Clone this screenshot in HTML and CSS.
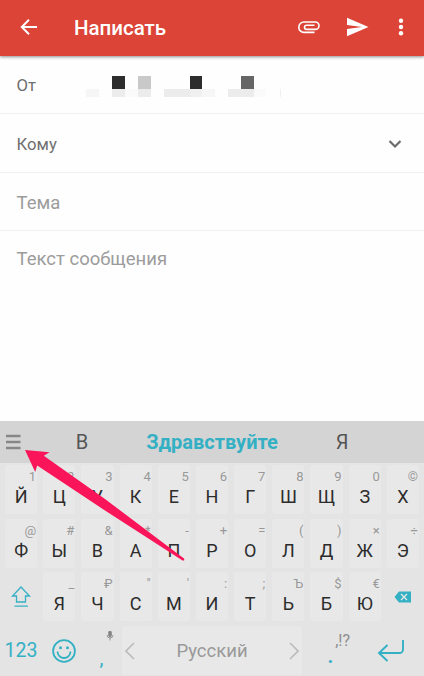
FILE: index.html
```html
<!DOCTYPE html>
<html lang="ru">
<head>
    <meta charset="utf-8">
    <title>Написать</title>
    <link rel="stylesheet" href="styles.css">
</head>
<body>
    <header class="toolbar">
        <svg class="back" width="24" height="24" viewBox="0 0 24 24"><path d="M20 12H5M12 4.8L4.8 12L12 19.2"/></svg>
        <h1>Написать</h1>
        <svg class="clip" width="24" height="24" viewBox="0 0 24 24"><path d="M17.5 17.4H7a5.2 5.2 0 0 1 0-10.4h11.3a3.7 3.7 0 0 1 0 7.4H9.6a2.1 2.1 0 0 1 0-4.2h7.9"/></svg>
        <svg class="send" width="24" height="24" viewBox="0 0 24 24"><path d="M2 21.2L23.5 12L2 2.8V10l15 2-15 2z"/></svg>
        <svg class="more" width="8" height="24" viewBox="0 0 8 24"><circle cx="4" cy="5.8" r="2.2"/><circle cx="4" cy="12" r="2.2"/><circle cx="4" cy="18.2" r="2.2"/></svg>
    </header>

    <main class="compose">
        <div class="field">
            <span>От</span>
            <svg class="address" width="196" height="22" viewBox="0 0 196 22" shape-rendering="crispEdges">
                <path fill="#2d2d2d" d="M26 0h13v13H26zM104 0h12v13h-12z"/>
                <path fill="#c9c9c9" d="M52 0h13v13H52z"/>
                <path fill="#666" d="M155 0h13v13h-13z"/>
                <path fill="#f6f6f6" d="M0 13h13v8H0zM116 13h13v8h-13z"/>
                <path fill="#ececec" d="M26 13h13v8H26zM52 13h13v8H52zM78 13h26v8H78zM142 13h26v8h-26z"/>
                <path fill="#fafafa" d="M39 13h13v8H39zM168 13h12v8h-12z"/>
                <path fill="#f0f0f0" d="M104 13h12v8h-12zM194 13h1v8h-1z"/>
            </svg>
        </div>
        <div class="field">
            <span>Кому</span>
            <svg class="expand" width="14" height="10" viewBox="0 0 14 10"><path d="M1.5 2L7 7.5L12.5 2"/></svg>
        </div>
        <div class="field subject">Тема</div>
        <div class="message">Текст сообщения</div>
    </main>

    <section class="keyboard">
        <div class="suggestions">
            <svg class="menu" width="16" height="16" viewBox="0 0 16 16"><path d="M1 2h14.5M1 8h14.5M1 14h14.5"/></svg>
            <span>В</span>
            <b>Здравствуйте</b>
            <span>Я</span>
        </div>

        <div class="row">
            <div class="key"><i>1</i>Й</div>
            <div class="key"><i>2</i>Ц</div>
            <div class="key"><i>3</i>У</div>
            <div class="key"><i>4</i>К</div>
            <div class="key"><i>5</i>Е</div>
            <div class="key"><i>6</i>Н</div>
            <div class="key"><i>7</i>Г</div>
            <div class="key"><i>8</i>Ш</div>
            <div class="key"><i>9</i>Щ</div>
            <div class="key"><i>0</i>З</div>
            <div class="key"><i>©</i>Х</div>
        </div>
        <div class="row">
            <div class="key"><i>@</i>Ф</div>
            <div class="key"><i>#</i>Ы</div>
            <div class="key"><i>&amp;</i>В</div>
            <div class="key"><i>*</i>А</div>
            <div class="key"><i>-</i>П</div>
            <div class="key"><i>+</i>Р</div>
            <div class="key"><i>=</i>О</div>
            <div class="key"><i>(</i>Л</div>
            <div class="key"><i>)</i>Д</div>
            <div class="key"><i>×</i>Ж</div>
            <div class="key"><i>÷</i>Э</div>
        </div>
        <div class="row">
            <div class="special">
                <svg class="shift" width="20" height="22" viewBox="0 0 20 22"><path d="M10 1L1.5 10H5.5V16H14.5V10H18.5zM3.5 20.2h13.5"/></svg>
            </div>
            <div class="key"><i>_</i>Я</div>
            <div class="key"><i>₽</i>Ч</div>
            <div class="key"><i>"</i>С</div>
            <div class="key"><i>'</i>М</div>
            <div class="key"><i>:</i>И</div>
            <div class="key"><i>;</i>Т</div>
            <div class="key"><i>Ъ</i>Ь</div>
            <div class="key"><i>$</i>Б</div>
            <div class="key"><i>€</i>Ю</div>
            <div class="special">
                <svg width="18" height="12" viewBox="0 0 18 12"><path fill="#34b0c4" d="M5 0.5H17V11.5H5L0.5 6z"/><path stroke="#e6e6e6" stroke-width="1.3" d="M7 3l6 6M13 3l-6 6"/></svg>
            </div>
        </div>
        <div class="row bottom">
            <div class="special digits">123</div>
            <div class="special">
                <svg class="smile" width="26" height="26" viewBox="0 0 26 26"><circle cx="13" cy="13" r="10.9"/><path d="M6.500 13.500a6.500 6.500 0 0 0 13 0"/><circle class="eye" cx="9.500" cy="9.800" r="1.500"/><circle class="eye" cx="16.500" cy="9.800" r="1.500"/></svg>
            </div>
            <div class="special comma">
                <svg class="mic" width="8" height="10" viewBox="0 0 8 10"><rect x="2.6" y="0" width="2.8" height="5.8" rx="1.4"/><path fill="none" d="M1 4a3 3 0 0 0 6 0M4 7v2.5"/></svg>,
            </div>
            <div class="space">
                <svg width="10" height="18" viewBox="0 0 10 18"><path d="M9 1L1 9L9 17"/></svg>
                Русский
                <svg width="10" height="18" viewBox="0 0 10 18"><path d="M1 1L9 9L1 17"/></svg>
            </div>
            <div class="special period"><i>,!?</i>.</div>
            <div class="special">
                <svg class="enter" width="28" height="24" viewBox="0 0 28 24"><path d="M26 1V10.5a3.5 3.5 0 0 1-3.5 3.5H2M10.5 6L2 14L10.5 22"/></svg>
            </div>
        </div>
    </section>

    <svg class="pointer" width="162" height="114" viewBox="0 0 162 114"><path d="M0 0L24.5 2.3L18.8 5.7L80 49L159 108.5Q160 111 157.5 110.5L80 60.5L12.2 15.5L10.2 22z"/></svg>
</body>
</html>
```
FILE: styles.css
```css
body {
    display: flex;
    flex-direction: column;
    position: relative;
    width: 424px;
    height: 676px;
    margin: 0;
    overflow: hidden;
    background: #fefefe;
    font-family: Roboto, sans-serif;
}
svg {
    flex: none;
    fill: none;
}

/* toolbar */
.toolbar {
    display: flex;
    align-items: center;
    box-sizing: border-box;
    height: 56px;
    padding: 0 19px 2px 17px;
    background: #dc4437;
    box-shadow: 0 1px 3px rgba(0, 0, 0, 0.45);
}
.toolbar h1 {
    flex: 1;
    margin: 2px 0 0 33px;
    color: #fff;
    font-size: 20.5px;
    font-weight: 500;
}
.back {
    stroke: #fff;
    stroke-width: 2;
}
.clip {
    margin-right: 24px;
    stroke: #fff;
    stroke-width: 1.6;
}
.send {
    margin-right: 28px;
    fill: #fff;
}
.more {
    fill: #fff;
}

/* message form */
.compose {
    flex: 1;
}
.field {
    display: flex;
    align-items: center;
    box-sizing: border-box;
    height: 58px;
    padding: 2px 22px 0 16.5px;
    border-bottom: 1px solid #f0f0f0;
    color: #6f6f6f;
    font-size: 16.7px;
}
.field:nth-child(2) {
    height: 59px;
}
.address {
    margin: 3px 0 0 50px;
}
.expand {
    margin-left: auto;
    stroke: #6b6b6b;
    stroke-width: 2.2;
}
.subject,
.message {
    color: #9c9c9c;
    font-size: 18.5px;
}
.message {
    padding: 17px 16.5px;
}

/* keyboard */
.keyboard {
    height: 255px;
    background: #e4e4e4;
    color: #2c2c2c;
}
.suggestions {
    display: grid;
    grid-template-columns: 40px 84px 176px 84px;
    align-items: center;
    height: 42px;
    margin-bottom: 2px;
    background: #d4d4d4;
    color: #555;
    font-size: 20px;
    text-align: center;
}
.suggestions b {
    color: #34b0c4;
}
.menu {
    margin-left: 5px;
    stroke: #868686;
    stroke-width: 2.3;
}
.row {
    display: grid;
    grid-template-columns: repeat(11, 1fr);
    column-gap: 6px;
    height: 49px;
    margin: 0 5px 4.5px;
}
.key {
    position: relative;
    box-sizing: border-box;
    height: 49px;
    padding-top: 16px;
    border-radius: 3px;
    background: #e8e8e8;
    font-size: 18px;
    line-height: 32px;
    text-align: center;
}
.key i {
    position: absolute;
    top: 4px;
    right: 1px;
    color: #999;
    font-size: 13px;
    font-style: normal;
    line-height: 16px;
}
.special {
    display: flex;
    align-items: center;
    justify-content: center;
    position: relative;
    height: 49px;
    color: #34b0c4;
    font-size: 20px;
}
.shift {
    stroke: #34b0c4;
    stroke-width: 1.3;
}
.bottom {
    grid-template-columns: 32px 41px 26px 180px 45px 1fr;
    padding-top: 0.5px;
}
.digits {
    font-size: 19.5px;
}
.smile {
    stroke: #34b0c4;
    stroke-width: 1.8;
}
.smile .eye {
    fill: #34b0c4;
    stroke: none;
}
.comma {
    box-sizing: border-box;
    padding: 14px 3px 0 0;
}
.mic {
    position: absolute;
    top: 5px;
    right: 2px;
    fill: #858585;
    stroke: #858585;
    stroke-width: 0.8;
}
.space {
    display: flex;
    align-items: center;
    justify-content: space-between;
    height: 49px;
    padding: 0 3px;
    border-radius: 3px;
    background: #e8e8e8;
    color: #999;
    font-size: 18.5px;
}
.space svg {
    stroke: #bbb;
    stroke-width: 1.6;
}
.period {
    box-sizing: border-box;
    padding-top: 5px;
    font-size: 28px;
}
.period i {
    position: absolute;
    top: 5px;
    right: 3px;
    color: #8c8c8c;
    font-size: 16px;
    font-style: normal;
}
.enter {
    margin-left: 3px;
    stroke: #34b0c4;
    stroke-width: 1.9;
}

/* callout arrow over the keyboard */
.pointer {
    position: absolute;
    top: 450px;
    left: 25px;
    fill: #fa1459;
}
```
